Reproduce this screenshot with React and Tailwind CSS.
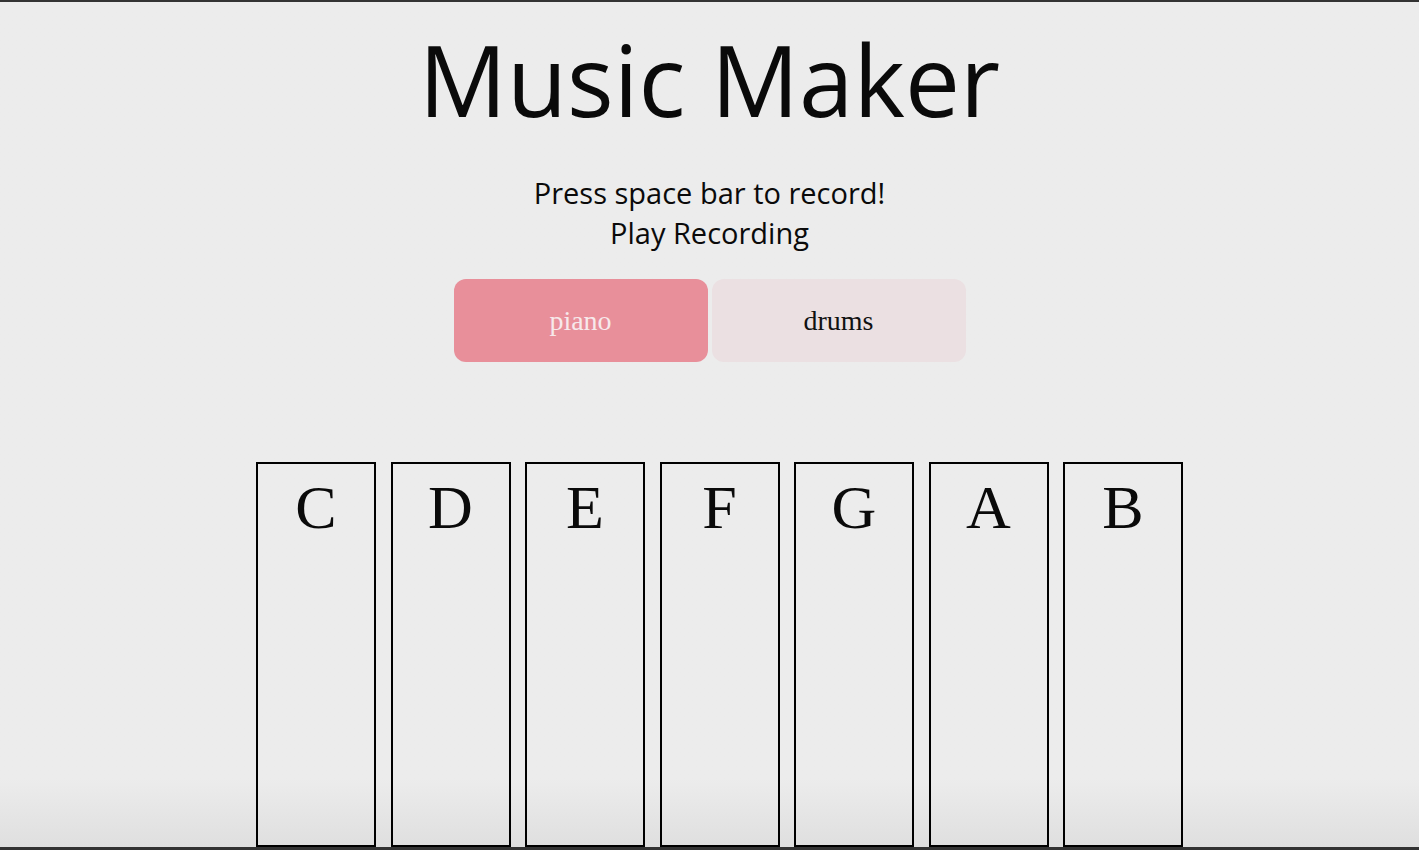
import React, { useState } from 'react';

const NOTES = ['C', 'D', 'E', 'F', 'G', 'A', 'B'];

const App = () => {
  const [instrument, setInstrument] = useState('piano');

  return (
    <div className="h-[850px] overflow-hidden bg-gradient-to-b from-[#ececec] via-[#ececec] via-[92%] to-[#dfdfdf] border-t-2 border-b-[3px] border-[#333333]">
      {/* Header */}
      <h1 className="mt-[27px] text-center text-[98px] leading-[100px] text-[#0a0a0a] font-['Open_Sans',sans-serif]">
        Music Maker
      </h1>

      <div className="mt-[44px] text-center text-[29px] leading-[40px] text-[#0a0a0a] font-['Open_Sans',sans-serif]">
        <p>Press space bar to record!</p>
        <p>Play Recording</p>
      </div>

      {/* Instrument switch */}
      <div className="mt-[26px] flex justify-center gap-1">
        <button
          onClick={() => setInstrument('piano')}
          className={`w-[254px] h-[83px] rounded-xl text-[28px] font-['Liberation_Serif',serif] ${
            instrument === 'piano' ? 'bg-[#e88f9a] text-[#f7e9eb]' : 'bg-[#ebe0e2] text-[#111]'
          }`}
        >
          piano
        </button>
        <button
          onClick={() => setInstrument('drums')}
          className={`w-[254px] h-[83px] rounded-xl text-[28px] font-['Liberation_Serif',serif] ${
            instrument === 'drums' ? 'bg-[#e88f9a] text-[#f7e9eb]' : 'bg-[#ebe0e2] text-[#111]'
          }`}
        >
          drums
        </button>
      </div>

      {/* Keys */}
      <div className="mt-[100px] flex justify-center gap-[14.5px] pl-[20px]">
        {NOTES.map(note => (
          <div
            key={note}
            className="w-[120px] h-[385px] shrink-0 border-2 border-black pt-[12px] text-center text-[62px] leading-[62px] text-[#0a0a0a] font-['Liberation_Serif',serif]"
          >
            {note}
          </div>
        ))}
      </div>
    </div>
  );
};

export default App;
